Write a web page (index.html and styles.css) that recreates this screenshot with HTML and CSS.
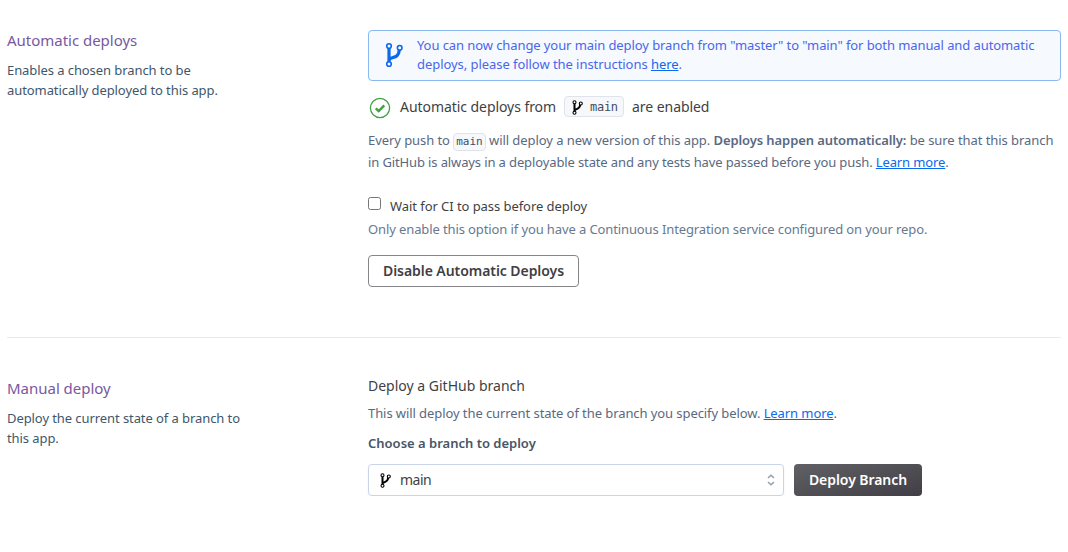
FILE: index.html
```html
<!DOCTYPE html>
<html lang="en">
<head>
<meta charset="utf-8">
<title>Deploy</title>
<link rel="stylesheet" href="styles.css">
</head>
<body>
<svg class="defs" aria-hidden="true">
  <symbol id="branch" viewBox="0 0 18 26">
    <path class="stem" d="M4 6V20M4 18.500C5 13.500 13.500 18 14.300 8"/>
    <circle cx="4" cy="4" r="2.300"/><circle cx="4" cy="22" r="2.300"/><circle cx="14.700" cy="5.800" r="2.300"/>
  </symbol>
  <symbol id="branch-compact" viewBox="0 0 11 15">
    <path class="stem" d="M2.500 3.500V12M2.500 10.500C4 8.500 8 9.500 8.300 4.500"/>
    <circle cx="2.500" cy="2.300" r="1.500"/><circle cx="2.500" cy="12.700" r="1.500"/><circle cx="8.800" cy="3.500" r="1.500"/>
  </symbol>
</svg>
<main class="page">
  <section class="section automatic">
    <header class="intro">
      <h2>Automatic deploys</h2>
      <p>Enables a chosen branch to be<br>automatically deployed to this app.</p>
    </header>
    <div class="content">
      <div class="notice">
        <svg class="branch branch-large"><use href="#branch"/></svg>
        <p>You can now change your main deploy branch from "master" to "main" for both manual and automatic<br><span class="notice-second">deploys, please follow the instructions <a href="#">here</a>.</span></p>
      </div>
      <div class="status">
        <svg class="check" viewBox="0 0 22 22"><circle cx="11" cy="11" r="9.600"/><path d="M6.700 11.300L9.700 14L15.300 8.300"/></svg>
        <span>Automatic deploys from</span>
        <span class="badge"><svg class="branch branch-small"><use href="#branch-compact"/></svg><span>main</span></span>
        <span>are enabled</span>
      </div>
      <p class="detail">Every push to <code>main</code> will deploy a new version of this app. <strong>Deploys happen automatically:</strong> be sure that this branch<br><span class="detail-second">in GitHub is always in a deployable state and any tests have passed before you push. <a href="#">Learn more</a>.</span></p>
      <label class="option"><input type="checkbox"><span>Wait for CI to pass before deploy</span></label>
      <p class="hint">Only enable this option if you have a Continuous Integration service configured on your repo.</p>
      <button class="button outline">Disable Automatic Deploys</button>
    </div>
  </section>
  <section class="section manual">
    <header class="intro">
      <h2>Manual deploy</h2>
      <p>Deploy the current state of a branch to<br>this app.</p>
    </header>
    <div class="content">
      <h3>Deploy a GitHub branch</h3>
      <p class="summary">This will deploy the current state of the branch you specify below. <a href="#">Learn more</a>.</p>
      <p class="field-label">Choose a branch to deploy</p>
      <div class="controls">
        <div class="select"><svg class="branch branch-small"><use href="#branch-compact"/></svg><span>main</span><svg class="sort" viewBox="0 0 8 12"><path d="M1 4L4 1.300L7 4M1 8L4 10.700L7 8"/></svg></div>
        <button class="button primary">Deploy Branch</button>
      </div>
    </div>
  </section>
</main>
</body>
</html>
```
FILE: styles.css
```css
* { box-sizing: border-box; }
body { margin: 0; background: #fff; color: #3f3f44; font: 13px/20px "Noto Sans", sans-serif; white-space: nowrap; }
h2, h3, p { margin: 0; font-weight: 400; }
a { color: #0b69ec; text-decoration: underline; text-underline-offset: 1px; }
.defs { position: absolute; width: 0; height: 0; }
.page { padding: 0 7px; }
.section { display: grid; grid-template-columns: 361px 693px; }
.automatic { height: 338px; padding-top: 30px; border-bottom: 1px solid #e9e9f1; }
.manual { padding-top: 37px; }
.intro { margin-top: -1px; }
.intro h2 { font-size: 15px; line-height: 22px; letter-spacing: -.02px; color: #79589f; }
.intro p { margin-top: 9px; letter-spacing: -.08px; color: #40576b; }
.manual .intro { margin-top: 0; padding-top: 2px; }
.notice { display: flex; height: 51px; padding: 5px 15px 0 16px; gap: 14px; border: 1px solid #8ab9f0; border-radius: 4px; background: #f6f9fe; color: #4a67ea; line-height: 19px; letter-spacing: -.087px; }
.notice-second { letter-spacing: -.055px; }
.branch { fill: #fff; stroke: currentColor; stroke-width: 1.600; flex: none; }
.stem { fill: none; stroke-width: 3.200; }
.branch-large { width: 18px; height: 26px; margin-top: 6px; color: #0b69ec; }
.branch-small { width: 11px; height: 15px; color: #000; stroke-width: 1.100; }
.branch-small, #branch-compact { stroke-width: 1.100; }
#branch-compact .stem { stroke-width: 2; }
.status { display: flex; align-items: center; height: 22px; margin-top: 15px; font-size: 14px; letter-spacing: -.06px; }
.check { width: 22px; height: 22px; margin: 2px 9px 0 1px; fill: none; stroke: #43a047; stroke-width: 1.300; }
.check path { stroke-width: 2.400; }
.badge { display: flex; align-items: center; width: 60px; height: 21px; margin: -1px 8px 0; padding-left: 7px; gap: 7px; border: 1px solid #dfe3ea; border-radius: 4px; background: #f7f8fb; color: #3f4e5b; font: 12px "DejaVu Sans Mono", monospace; letter-spacing: -.3px; }
.badge .branch { margin-top: 2px; }
.detail { margin-top: 11px; line-height: 22px; letter-spacing: -.067px; color: #596981; }
.detail-second { letter-spacing: -.123px; }
code { display: inline-block; height: 18px; padding: 0 2px; border: 1px solid #dfe3ea; border-radius: 4px; background: #f7f8fb; color: #3f4e5b; font: 11px/16px "DejaVu Sans Mono", monospace; letter-spacing: 0; }
strong { font-weight: 600; letter-spacing: -.09px; }
.option { display: flex; height: 20px; margin-top: 23px; letter-spacing: -.06px; }
.option input { width: 13px; height: 13px; margin: 1px 9px 0 0; }
.hint { margin-top: 3px; letter-spacing: -.11px; color: #68798f; }
.button { display: block; height: 32px; border-radius: 4px; font: 600 14px/20px "Noto Sans", sans-serif; letter-spacing: -.06px; padding: 0 0 1px; }
.outline { width: 211px; margin-top: 16px; border: 1px solid #858589; background: #fff; color: #3f3f44; }
.manual h3 { padding-top: 1px; font-size: 14px; line-height: 20px; }
.summary { margin-top: 7px; letter-spacing: -.08px; color: #596981; }
.field-label { margin-top: 10px; font-weight: 600; color: #475666; }
.controls { display: flex; gap: 10px; margin-top: 11px; }
.select { display: flex; align-items: center; width: 416px; height: 32px; padding: 0 8px 0 11px; border: 1px solid #cad4e8; border-radius: 4px; box-shadow: 0 1px 2px #eceff5; font-size: 14px; }
.select span { margin: -1px 0 0 9px; letter-spacing: -.5px; }
.sort { width: 8px; height: 12px; margin-left: auto; fill: none; stroke: #919eac; stroke-width: 1.500; }
.primary { width: 128px; border: 0; background: linear-gradient(165deg, #606065, #413f45); color: #fff; }
```
